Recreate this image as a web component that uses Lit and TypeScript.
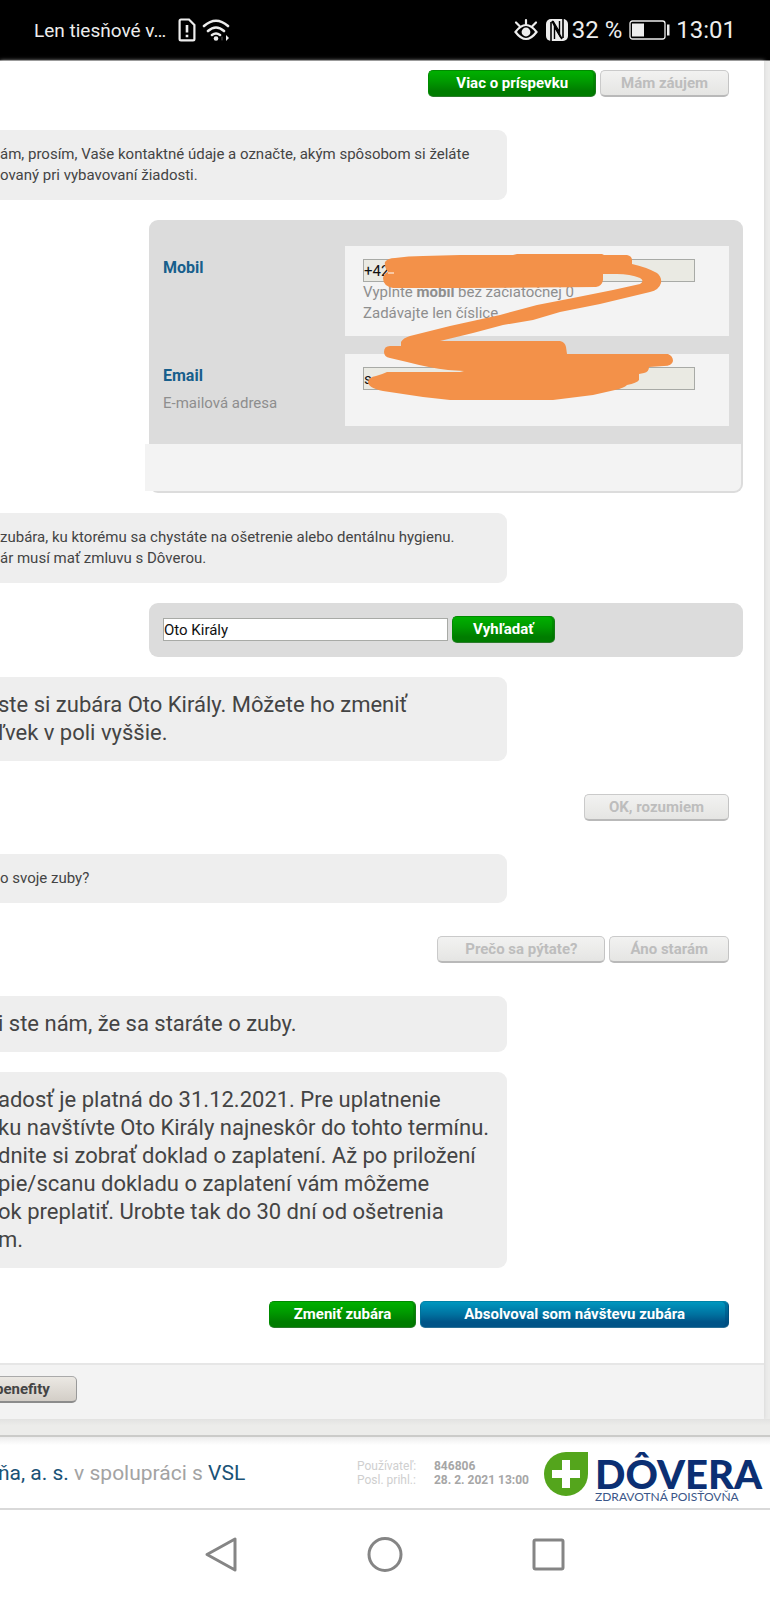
import { LitElement, html, css, svg } from "lit";
import { customElement, property } from "lit/decorators.js";

const scribble = svg`
  <path fill="#f39149" fill-rule="evenodd" d="M385 262 Q388 258 395 258 Q408 256 423 256 L460 255 L513 255 L517 254 L602 254 L604 255 L627 255 Q632 256 632 260 L632 264 Q646 267 657 273 Q662 277 661 283 Q659 290 650 292
    L600 304 L560 312 L533 320 L503 325 L473 333 L440 341 L560 341 Q565 342 566 347 L567 354 L668 354 Q673 356 673 361 Q672 366 664 366 L649 367 Q649 372 644 373 L639 374 L639 380 Q637 383 627 385 Q624 388 615 390
    L593 395 L553 400 L450 400 L423 397 L383 391 Q368 388 368 382 Q369 377 376 376 Q383 374 387 372 L460 372 L464 371 L448 370 Q430 368 407 362 L390 358 Q384 357 384 352 Q384 346 390 346 L401 346 L401 342 Q403 338 410 336 L430 331 L450 326
    L500 315 L537 305 L573 298 L613 290 L640 284 Q645 281 640 278 Q630 274 617 274 L603 274 L603 280 Q602 286 596 287 L460 288 L393 288 Q383 286 383 278 Q384 273 388 272 Q384 267 385 262Z"/>
  <path stroke="#fff" stroke-width="1" d="M388 273H394"/>`;

@customElement("status-bar")
class StatusBar extends LitElement {
  static styles = css`
    :host { display: flex; align-items: center; height: 61px; padding: 0 34px; background: #000; color: #ededed;
      border-bottom: 1px solid #777; box-sizing: border-box; font-size: 24px; }
    .carrier { font-size: 19px; margin-right: 12px; }
    .gap { flex: 1; }
    .wifi { margin-left: 6px; }
    .nfc { margin: 0 4px 0 8px; }
    .battery { margin: 0 5px 0 7px; }
  `;
  render() {
    return html`
      <span class="carrier">Len tiesňové v…</span>
      <svg width="18" height="24" viewBox="0 0 18 24" fill="none" stroke="#ededed" stroke-width="2.2">
        <path d="M3 1.5H11L16.4 7V21Q16.4 22.4 15 22.4H3Q1.6 22.4 1.6 21V3Q1.6 1.5 3 1.5Z" /><path d="M9 7V14.5M9 16.8V19.3" stroke-width="2.6" />
      </svg>
      <svg class="wifi" width="28" height="24" viewBox="0 0 28 24" fill="none" stroke="#ededed" stroke-width="2.6" stroke-linecap="round">
        <path d="M2 8Q14-2.5 26 8M6 13Q14 6 22 13M10 17Q14 14 18 17" /><circle cx="14" cy="20.5" r="2.3" fill="#ededed" stroke="none" />
        <path d="M24 17L27 20L24 23Z" fill="#ededed" stroke="none" /><path d="M20 19V22" stroke="#555" stroke-width="1" />
      </svg>
      <span class="gap"></span>
      <svg width="24" height="22" viewBox="0 0 24 22" fill="none" stroke="#ededed" stroke-width="2.2" stroke-linecap="round">
        <path d="M1.5 13Q12-1 22.5 13Q12 27 1.5 13Z" /><circle cx="12" cy="13" r="4.4" fill="#ededed" stroke="none" />
        <path d="M12 5V1.2M5.5 7L2 3.5M18.5 7L22 3.5" />
      </svg>
      <svg class="nfc" width="22" height="24" viewBox="0 0 22 24">
        <rect y="1" width="22" height="22" rx="5" fill="#ededed" />
        <path d="M5 4V23M17 1V20M6 3L16 21" stroke="#000" stroke-width="1.6" /><path d="M8.500 21V9L15 20M7 3L13.500 14V3" fill="none" stroke="#000" stroke-width="1.400" />
      </svg>
      <span>32 %</span>
      <svg class="battery" width="42" height="20" viewBox="0 0 42 20">
        <rect x="1" y="1" width="35" height="18" rx="2.5" fill="none" stroke="#ededed" stroke-width="1.3" />
        <path d="M3 3.5H15V16.5H3ZM38 4.5H40.5V15.5H38Z" fill="#ededed" />
      </svg>
      <span>13:01</span>`;
  }
}

@customElement("push-button")
class PushButton extends LitElement {
  @property() kind = "green";
  @property() size = "normal";
  @property({ type: Boolean }) disabled = false;
  static styles = css`
    :host { display: block; }
    button { display: block; box-sizing: border-box; height: 27px; padding: 0 24px 2px; border: 1px solid; border-radius: 5px;
      font: bold 15px/22px Roboto, sans-serif; white-space: nowrap; }
    .tight { padding-left: 20px; padding-right: 20px; }
    .roomy { padding-left: 27px; padding-right: 27px; }
    .wide { padding-left: 43px; padding-right: 43px; }
    .green { color: #fff; background: linear-gradient(#00b000, #009a00 40%, #007c00 80%); border-color: #008a00 #157a15 #2b7a2b #008a00;
      box-shadow: inset -2px 0 0 #006e0066; }
    .blue { color: #fff; background: linear-gradient(#0097bf, #00719f 50%, #005488 80%); border-color: #0083a8 #00507e #2a6f96 #00719a;
      box-shadow: inset -3px 0 0 #00477866; }
    .plain { color: #bdbdbd; background: linear-gradient(#f2f2f1, #e5e5e3); border-color: #cacaca #c4c4c4 #b9b9b9 #cacaca; border-bottom-width: 2px; padding-bottom: 1px; }
    .stone { color: #444; background: linear-gradient(#ebe8e3, #d3cec7); border-color: #aaa #999 #8c8c8c; border-bottom-width: 2px; border-left: 0;
      border-radius: 0 5px 5px 0; padding: 0 26px 1px 0; margin-left: -5px; }
  `;
  render() {
    return html`<button type="button" class="${this.kind} ${this.size}" ?disabled=${this.disabled}><slot></slot></button>`;
  }
}

@customElement("chat-bubble")
class ChatBubble extends LitElement {
  static styles = css`
    :host { display: block; margin-right: 257px; padding: 14px 0; background: #eee; color: #444; border-radius: 0 9px 9px 0;
      font-size: 15px; line-height: 21px; white-space: pre-line; }
    :host([large]) { margin-left: -2px; font-size: 22px; line-height: 28px; }
  `;
  render() {
    return html`<slot></slot>`;
  }
}

@customElement("app-root")
class AppRoot extends LitElement {
  static styles = css`
    :host { display: block; font-family: Roboto, sans-serif; background: #fff; overflow: hidden; }
    .page { padding-right: 6px; background: #ececeb; }
    .sheet { background: #fff; box-shadow: 0 0 4px #d0d0d0; }
    .chat { display: flex; flex-direction: column; gap: 20px; padding: 9px 0 35px; }
    .answers { display: flex; justify-content: flex-end; gap: 4px; padding-right: 35px; margin: 13px 0; }
    .answers:first-child { margin-top: 0; }
    .answers:last-child { margin-bottom: 0; }
    .panel { margin: 0 21px 0 149px; background: #dcdcdc; border-radius: 9px; position: relative; }
    .fields { display: grid; grid-template-columns: 182px 1fr; row-gap: 18px; padding: 26px 14px 18px; }
    .label { padding-top: 12px; color: #8e8e8e; font-size: 15px; line-height: 21px; }
    .label label { display: block; color: #175f8c; font-size: 16px; font-weight: bold; line-height: 20px; margin-bottom: 7px; }
    .field { min-height: 72px; box-sizing: border-box; padding: 13px 34px 12px 18px; background: #f3f3f3; color: #8e8e8e; font-size: 15px; line-height: 21px; }
    input { display: block; box-sizing: border-box; width: 100%; height: 23px; padding: 0; border: 1px solid #a8aaa6; border-radius: 0;
      background: #eaeae3; color: #111; font: 15px/21px Roboto, sans-serif; }
    .strip { height: 47px; margin: 0 2px 0 -4px; background: #f3f3f3; border-radius: 0 0 7px 0; }
    .tray { padding-bottom: 2px; }
    .scribble { position: absolute; left: 0; top: 0; pointer-events: none; }
    .search { display: flex; align-items: center; gap: 4px; padding: 13px 14px 14px; }
    .search input { width: 285px; background: #fff; }
    .tools { padding: 11px 0 16px; background: #f3f3f3; border-top: 2px solid #e6e6e6; }
    .ledge { height: 16px; background: linear-gradient(#e2e2e1, #ececea 40%); border-bottom: 2px solid #cbcbc9; }
    footer { display: flex; align-items: center; height: 73px; box-sizing: border-box; padding-right: 8px; background: linear-gradient(#ececec, #fff 8px);
      border-bottom: 2px solid #d9d9d9; }
    .partners { flex: 1; margin-left: -2px; color: #a3a3a3; font-size: 21px; white-space: nowrap; }
    .partners a { color: #1a5276; text-decoration: none; }
    dl { display: grid; grid-template-columns: 77px auto; margin: 0 15px 0 0; color: #cfcfcf; font-size: 12px; line-height: 14px; white-space: nowrap; }
    dd { margin: 0; color: #a6a6a6; font-weight: bold; }
    .logo { display: flex; align-items: flex-start; gap: 7px; color: #0b2f73; font-family: Lato, sans-serif; text-decoration: none; height: 54px; }
    .leaf { margin-top: 6px; }
    .words { padding-top: 13px; }
    .name { display: block; font-size: 40px; font-weight: 900; line-height: 31px; }
    .tag { display: block; font-size: 12px; line-height: 13px; color: #3a5688; white-space: nowrap; }
    nav { display: flex; justify-content: center; gap: 126px; padding: 26px 0 27px; }
    nav button { display: block; padding: 0; border: 0; background: none; width: 38px; height: 38px; }
    nav svg { display: block; }
  `;
  render() {
    return html`
      <status-bar></status-bar>
      <div class="page">
        <main class="sheet">
          <div class="chat">
            <div class="answers">
              <push-button size="roomy">Viac o príspevku</push-button>
              <push-button kind="plain" size="tight" disabled>Mám záujem</push-button>
            </div>
            <chat-bubble>ám, prosím, Vaše kontaktné údaje a označte, akým spôsobom si želáte${"\n"}ovaný pri vybavovaní žiadosti.</chat-bubble>
            <section class="panel tray">
              <div class="fields">
                <div class="label"><label for="mobile">Mobil</label></div>
                <div class="field">
                  <input id="mobile" type="tel" .value=${"+42"} />
                  Vyplňte <b>mobil</b> bez začiatočnej 0<br />Zadávajte len číslice.
                </div>
                <div class="label"><label for="email">Email</label>E-mailová adresa</div>
                <div class="field"><input id="email" type="text" .value=${"s"} /></div>
              </div>
              <div class="strip"></div>
              <svg class="scribble" width="594" height="273" viewBox="149 220 594 273">${scribble}</svg>
            </section>
            <chat-bubble>zubára, ku ktorému sa chystáte na ošetrenie alebo dentálnu hygienu.${"\n"}ár musí mať zmluvu s Dôverou.</chat-bubble>
            <section class="panel search">
              <input type="text" aria-label="Zubár" .value=${"Oto Király"} />
              <push-button size="tight">Vyhľadať</push-button>
            </section>
            <chat-bubble large>ste si zubára Oto Király. Môžete ho zmeniť${"\n"}ľvek v poli vyššie.</chat-bubble>
            <div class="answers"><push-button kind="plain" disabled>OK, rozumiem</push-button></div>
            <chat-bubble>o svoje zuby?</chat-bubble>
            <div class="answers">
              <push-button kind="plain" size="roomy" disabled>Prečo sa pýtate?</push-button>
              <push-button kind="plain" size="tight" disabled>Áno starám</push-button>
            </div>
            <chat-bubble large>i ste nám, že sa staráte o zuby.</chat-bubble>
            <chat-bubble large>adosť je platná do 31.12.2021. Pre uplatnenie${"\n"}ku navštívte Oto Király najneskôr do tohto termínu.${"\n"}dnite si zobrať doklad o zaplatení. Až po priložení${"\n"}pie/scanu dokladu o zaplatení vám môžeme${"\n"}ok preplatiť. Urobte tak do 30 dní od ošetrenia${"\n"}m.</chat-bubble>
            <div class="answers">
              <push-button>Zmeniť zubára</push-button>
              <push-button kind="blue" size="wide">Absolvoval som návštevu zubára</push-button>
            </div>
          </div>
          <div class="tools"><push-button kind="stone">benefity</push-button></div>
        </main>
      </div>
      <div class="ledge"></div>
      <footer>
        <div class="partners"><a href="#dovera">ňa, a. s.</a> v spolupráci s <a href="#vsl">VSL</a></div>
        <dl>
          <dt>Používateľ:</dt><dd>846806</dd>
          <dt>Posl. prihl.:</dt><dd>28. 2. 2021 13:00</dd>
        </dl>
        <a class="logo" href="#home">
          <svg class="leaf" width="44" height="44" viewBox="0 0 44 44">
            <path d="M22 0H44V22A22 22 0 1 1 22 0Z" fill="#54a51c" /><path d="M18 8H26V18H36V26H26V36H18V26H8V18H18Z" fill="#fff" />
          </svg>
          <span class="words"><span class="name">DÔVERA</span><span class="tag">ZDRAVOTNÁ POISŤOVŇA</span></span>
        </a>
      </footer>
      <nav>
        <button aria-label="Späť"><svg width="38" height="38" viewBox="0 0 38 38" fill="none" stroke="#858585" stroke-width="3" stroke-linejoin="round"><path d="M33 3V34L5 18.5Z" /></svg></button>
        <button aria-label="Domov"><svg width="38" height="38" viewBox="0 0 38 38" fill="none" stroke="#858585" stroke-width="3"><circle cx="19" cy="18.5" r="16" /></svg></button>
        <button aria-label="Prehľad"><svg width="38" height="38" viewBox="0 0 38 38" fill="none" stroke="#858585" stroke-width="3"><rect x="4" y="4" width="29" height="29" rx="1.5" /></svg></button>
      </nav>`;
  }
}
